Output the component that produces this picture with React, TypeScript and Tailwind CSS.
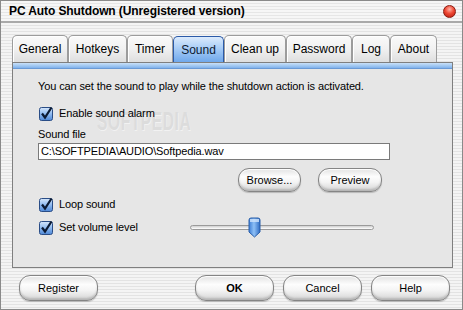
import React from "react";

const stripes =
  "bg-[repeating-linear-gradient(180deg,#f4f4f4_0px,#f4f4f4_2px,#e3e3e3_2px,#e3e3e3_3px)]";

function Check() {
  return (
    <svg width="15" height="15" viewBox="0 0 15 15" className="shrink-0">
      <defs>
        <linearGradient id="cbg" x1="0" y1="0" x2="0" y2="1">
          <stop offset="0" stopColor="#d6e7fb" />
          <stop offset="0.5" stopColor="#8fbaf0" />
          <stop offset="1" stopColor="#4d87d6" />
        </linearGradient>
      </defs>
      <rect x="0.5" y="1.5" width="13" height="13" rx="2" fill="url(#cbg)" stroke="#2a4d86" />
      <path d="M3 7.5 L6 11.5 L12.5 1.5" fill="none" stroke="#0b1a33" strokeWidth="2.2" />
    </svg>
  );
}

function Btn({ label, w, bold }: { label: string; w: string; bold?: boolean }) {
  return (
    <div
      className={`${w} h-full flex items-center justify-center rounded-[11px] border border-[#858585] bg-[linear-gradient(180deg,#e2e2e2_0%,#fdfdfd_35%,#f4f4f4_60%,#d4d4d4_100%)] shadow-[inset_0_-2px_2px_rgba(0,0,0,0.15),inset_0_1px_1px_#fff,0_1px_1px_rgba(0,0,0,0.2)] text-[11px] text-black ${bold ? "font-bold" : ""}`}
    >
      {label}
    </div>
  );
}

const tabs: { label: string; w: string; active?: boolean }[] = [
  { label: "General", w: "w-[56px]" },
  { label: "Hotkeys", w: "w-[59px]" },
  { label: "Timer", w: "w-[46px]" },
  { label: "Sound", w: "w-[51px]", active: true },
  { label: "Clean up", w: "w-[62px]" },
  { label: "Password", w: "w-[66px]" },
  { label: "Log", w: "w-[38px]" },
  { label: "About", w: "w-[47px]" },
];

export default function App() {
  return (
    <div
      className="w-[463px] h-[310px] overflow-hidden border border-[#8a8a8a] flex flex-col text-black"
      style={{ fontFamily: '"Liberation Sans", Arial, sans-serif' }}
    >
      {/* title bar */}
      <div className="h-[22px] shrink-0 flex items-center justify-between pl-[8px] pr-[6px] border-b-2 border-[#a9a9a9] bg-[repeating-linear-gradient(180deg,#f6f6f6_0px,#f6f6f6_2px,#e6e6e6_2px,#e6e6e6_3px)]">
        <span className="text-[12px] font-bold tracking-[-0.1px]">PC Auto Shutdown (Unregistered version)</span>
        <div className="w-[13px] h-[13px] rounded-full border border-[#8a1a10] bg-[radial-gradient(circle_at_50%_30%,#ffb2a6_0%,#f04a36_45%,#b3170a_100%)]" />
      </div>

      <div className={`flex-1 flex flex-col ${stripes} px-[11px] pt-[12px]`}>
        {/* tabs */}
        <div className="flex h-[27px] shrink-0 items-end">
          {tabs.map((t) =>
            t.active ? (
              <div
                key={t.label}
                className={`${t.w} h-[26px] flex items-center justify-center rounded-t-[5px] border border-b-0 border-[#2b5aa8] bg-[linear-gradient(180deg,#dcebfc_0%,#a9cdf6_45%,#6fa8ec_100%)] text-[12px] text-[#0c1a33]`}
              >
                {t.label}
              </div>
            ) : (
              <div
                key={t.label}
                className={`${t.w} h-[27px] flex items-center justify-center rounded-t-[5px] border border-b-0 border-[#9c9c9c] bg-[linear-gradient(180deg,#fafafa_0%,#f1f1f1_50%,#dedede_100%)] shadow-[inset_1px_1px_0_#fff] text-[12px]`}
              >
                {t.label}
              </div>
            )
          )}
        </div>

        {/* panel */}
        <div className="w-[441px] h-[206px] shrink-0 border border-[#7f7f7f] bg-[#e6e6e6] flex flex-col relative">
          {/* watermark (behind content) */}
          <div className="absolute left-[84px] top-[40px] origin-left scale-x-[0.62] pointer-events-none select-none text-[25px] font-bold tracking-[1px] text-[#dcdcdc] [text-shadow:1px_1px_0_#f2f2f2]">
            SOFTPEDIA
          </div>
          <div className="h-[6px] shrink-0 bg-[linear-gradient(180deg,#c9e0f8_0%,#9ec6f1_60%,#7fb1eb_100%)] border-b border-[#6a9ad6] relative" />
          <div className="pl-[25px] flex flex-col text-[11px] tracking-[-0.12px] relative">
            <div className="mt-[10px] h-[14px] flex items-center">
              You can set the sound to play while the shutdown action is activated.
            </div>
            <div className="mt-[13px] h-[15px] flex items-center gap-[5px] pl-[1px]">
              <Check />
              <span>Enable sound alarm</span>
            </div>
            <div className="mt-[6px] h-[14px] flex items-center">Sound file</div>
            <div className="mt-[2px] w-[352px] h-[17px] bg-white border border-[#7a7a7a] flex items-center pl-[2px]">
              C:\SOFTPEDIA\AUDIO\Softpedia.wav
            </div>
            <div className="mt-[8px] h-[24px] flex gap-[17px] pl-[200px] tracking-normal">
              <Btn label="Browse..." w="w-[63px]" />
              <Btn label="Preview" w="w-[64px]" />
            </div>
            <div className="mt-[5px] h-[15px] flex items-center gap-[5px] pl-[1px]">
              <Check />
              <span>Loop sound</span>
            </div>
            <div className="mt-[8px] h-[15px] flex items-center pl-[1px]">
              <div className="flex items-center gap-[5px] w-[151px]">
                <Check />
                <span>Set volume level</span>
              </div>
              <div className="relative w-[184px] h-[5px] rounded-full border border-[#9a9a9a] bg-[linear-gradient(180deg,#cfcfcf,#ffffff)]">
                <svg
                  width="13"
                  height="21"
                  viewBox="0 0 13 21"
                  className="absolute left-[57px] top-[-9px]"
                >
                  <defs>
                    <linearGradient id="th" x1="0" y1="0" x2="1" y2="0">
                      <stop offset="0" stopColor="#3f7fd6" />
                      <stop offset="0.45" stopColor="#8ec0f6" />
                      <stop offset="1" stopColor="#2f6cc4" />
                    </linearGradient>
                  </defs>
                  <path
                    d="M1 3 Q1 1 3 1 H10 Q12 1 12 3 V15 L6.5 20 L1 15 Z"
                    fill="url(#th)"
                    stroke="#2a5ea8"
                  />
                  <rect x="2" y="2" width="9" height="3" fill="#cfe4fb" opacity="0.8" />
                </svg>
              </div>
            </div>
          </div>
        </div>

        {/* bottom buttons */}
        <div className="mt-[7px] h-[26px] flex">
          <div className="ml-[7px] h-[26px] flex">
            <Btn label="Register" w="w-[79px]" />
          </div>
          <div className="ml-[97px] h-[26px] flex gap-[9px]">
            <Btn label="OK" w="w-[79px]" bold />
            <Btn label="Cancel" w="w-[79px]" />
            <Btn label="Help" w="w-[79px]" />
          </div>
        </div>
      </div>
    </div>
  );
}
